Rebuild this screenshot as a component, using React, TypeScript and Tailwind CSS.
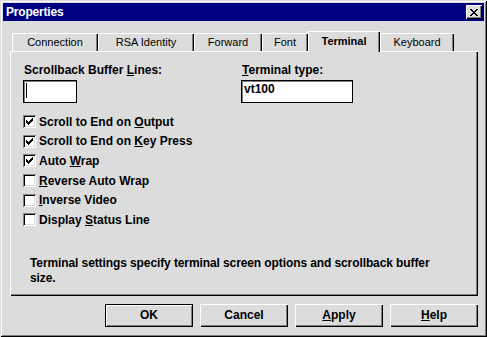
import React from 'react';

function CheckMark() {
  const px = [
    [6, 0], [5, 1], [6, 1], [0, 2], [4, 2], [5, 2], [6, 2], [0, 3], [1, 3], [3, 3], [4, 3], [5, 3],
    [0, 4], [1, 4], [2, 4], [3, 4], [4, 4], [1, 5], [2, 5], [3, 5], [2, 6],
  ];
  return (
    <svg width="7" height="7" viewBox="0 0 7 7" shapeRendering="crispEdges">
      {px.map(([x, y], i) => (
        <rect key={i} x={x} y={y} width="1" height="1" fill="#000" />
      ))}
    </svg>
  );
}

function CloseGlyph() {
  const rows = [
    [0, 1, 6, 7],
    [1, 2, 5, 6],
    [2, 3, 4, 5],
    [3, 4],
    [2, 3, 4, 5],
    [1, 2, 5, 6],
    [0, 1, 6, 7],
  ];
  return (
    <svg width="8" height="7" viewBox="0 0 8 7" shapeRendering="crispEdges">
      {rows.flatMap((r, y) => r.map((x) => <rect key={`${x}-${y}`} x={x} y={y} width="1" height="1" fill="#000" />))}
    </svg>
  );
}

function Checkbox({ checked, children }: { checked: boolean; children: React.ReactNode }) {
  return (
    <div className="flex h-[19.6px] items-center">
      <div className="flex h-[13px] w-[13px] items-center justify-center bg-white shadow-[inset_1px_1px_#808080,inset_-1px_-1px_#fff,inset_2px_2px_#000,inset_-2px_-2px_#dcdcdc]">
        {checked && <CheckMark />}
      </div>
      <span className="ml-[3px] text-[12px] font-bold leading-[14px]">{children}</span>
    </div>
  );
}

const tabs = [
  { label: 'Connection', w: 86 },
  { label: 'RSA Identity', w: 96 },
  { label: 'Forward', w: 68 },
  { label: 'Font', w: 46 },
  { label: 'Terminal', w: 72, sel: true },
  { label: 'Keyboard', w: 74 },
];

function Tab({ label, w, sel }: { label: string; w: number; sel?: boolean }) {
  if (sel) {
    return (
      <div
        style={{ width: w }}
        className="relative z-10 mb-[-1px] flex h-[21px] items-center justify-center bg-[#dcdcdc] pb-[1px] text-[11px] font-bold shadow-[inset_1px_1px_#fff,inset_-1px_0_#000,inset_-2px_0_#808080]"
      >
        {label}
      </div>
    );
  }
  return (
    <div
      style={{ width: w }}
      className="flex h-[18px] items-center justify-center pt-[1px] text-[11px] shadow-[inset_1px_1px_#fff,inset_-1px_0_#000,inset_-2px_0_#808080]"
    >
      {label}
    </div>
  );
}

function Button({ children, def }: { children: React.ReactNode; def?: boolean }) {
  const cls = def
    ? 'border border-black shadow-[inset_1px_1px_#fff,inset_-1px_-1px_#808080]'
    : 'shadow-[inset_1px_1px_#fff,inset_-1px_-1px_#000,inset_-2px_-2px_#808080]';
  return (
    <div className={`flex h-[23px] w-[88px] items-center justify-center pb-[2px] text-[12px] font-bold ${cls}`}>
      {children}
    </div>
  );
}

export default function App() {
  return (
    <div className="h-[337px] w-[487px] bg-[#dcdcdc] p-[3px] font-['Liberation_Sans',Arial,sans-serif] text-black shadow-[inset_1px_1px_#dcdcdc,inset_-1px_-1px_#000,inset_2px_2px_#fff,inset_-2px_-2px_#808080]">
      {/* Title bar */}
      <div className="flex h-[18px] items-center justify-between bg-[#000080] pl-[3px] pr-[2px]">
        <span className="text-[12px] font-bold leading-[14px] tracking-[-0.2px] text-white">Properties</span>
        <div className="flex h-[14px] w-[16px] items-center justify-center bg-[#dcdcdc] shadow-[inset_1px_1px_#fff,inset_-1px_-1px_#000,inset_-2px_-2px_#808080]">
          <CloseGlyph />
        </div>
      </div>

      <div className="pl-[7px] pt-[10px]">
        {/* Tabs */}
        <div className="flex h-[20px] items-end pl-[2px]">
          {tabs.map((t) => (
            <Tab key={t.label} {...t} />
          ))}
        </div>

        {/* Panel */}
        <div className="flex h-[245px] w-[468px] flex-col pl-[13px] pt-[12px] shadow-[inset_1px_1px_#fff,inset_-1px_-1px_#000,inset_-2px_-2px_#808080]">
          <div className="grid grid-cols-[218px_1fr]">
            <div className="flex flex-col">
              <span className="ml-[1px] text-[12px] font-bold leading-[14px]">
                Scrollback Buffer <u>L</u>ines:
              </span>
              <div className="mt-[3px] flex h-[23px] w-[54px] items-start border border-black bg-white pl-[2px] pt-[2px] shadow-[inset_1px_1px_#808080]">
                <div className="h-[15px] w-[1px] bg-black" />
              </div>
            </div>
            <div className="flex flex-col">
              <span className="ml-[1px] text-[12px] font-bold leading-[14px]">
                <u>T</u>erminal type:
              </span>
              <div className="mt-[3px] h-[23px] w-[112px] border border-black bg-white pl-[2px] pt-[1px] text-[12px] font-bold leading-[14px] shadow-[inset_1px_1px_#808080]">
                vt100
              </div>
            </div>
          </div>

          <div className="mt-[9px] flex flex-col">
            <Checkbox checked>
              Scroll to End on <u>O</u>utput
            </Checkbox>
            <Checkbox checked>
              Scroll to End on <u>K</u>ey Press
            </Checkbox>
            <Checkbox checked>
              Auto <u>W</u>rap
            </Checkbox>
            <Checkbox checked={false}>
              <u>R</u>everse Auto Wrap
            </Checkbox>
            <Checkbox checked={false}>
              <u>I</u>nverse Video
            </Checkbox>
            <Checkbox checked={false}>
              Display <u>S</u>tatus Line
            </Checkbox>
          </div>

          <p className="mt-auto mb-[10px] pl-[7px] text-[12px] font-bold leading-[15px] tracking-[-0.1px]">
            Terminal settings specify terminal screen options and scrollback buffer
            <br />
            size.
          </p>
        </div>

        {/* Buttons */}
        <div className="mt-[8px] flex w-[468px] justify-end gap-[7px]">
          <Button def>OK</Button>
          <Button>Cancel</Button>
          <Button>
            <u>A</u>pply
          </Button>
          <Button>
            <u>H</u>elp
          </Button>
        </div>
      </div>
    </div>
  );
}
